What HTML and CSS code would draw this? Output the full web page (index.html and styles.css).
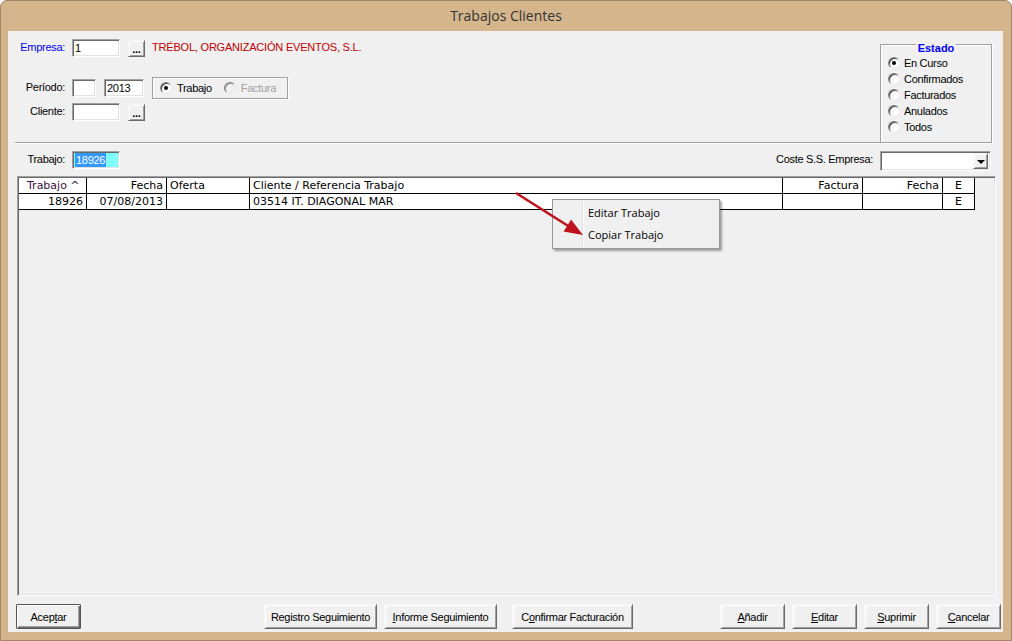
FILE: index.html
```html
<!DOCTYPE html>
<html lang="es">
<head>
    <meta charset="UTF-8">
    <title>Trabajos Clientes</title>
    <link rel="stylesheet" href="styles.css">
</head>
<body>
<div class="window">
    <div class="titlebar">Trabajos Clientes</div>
    <div class="client">
        <div class="top">
            <div class="top-left">
                <div class="row row-empresa">
                    <span class="lbl lbl-blue">Empresa:</span>
                    <span class="field field-empresa">1</span>
                    <button class="btn btn-dots">...</button>
                    <span class="empresa-name">TRÉBOL, ORGANIZACIÓN EVENTOS, S.L.</span>
                </div>
                <div class="row row-periodo">
                    <span class="lbl">Período:</span>
                    <span class="field field-mes"></span>
                    <span class="field field-anio">2013</span>
                    <div class="group-tipo">
                        <span class="opt"><span class="radio checked"></span>Trabajo</span>
                        <span class="opt disabled"><span class="radio"></span>Factura</span>
                    </div>
                </div>
                <div class="row row-cliente">
                    <span class="lbl">Cliente:</span>
                    <span class="field field-cliente"></span>
                    <button class="btn btn-dots">...</button>
                </div>
            </div>
            <div class="estado">
                <div class="estado-title"><span>Estado</span></div>
                <div class="estado-opt"><span class="radio checked"></span>En Curso</div>
                <div class="estado-opt"><span class="radio"></span>Confirmados</div>
                <div class="estado-opt"><span class="radio"></span>Facturados</div>
                <div class="estado-opt"><span class="radio"></span>Anulados</div>
                <div class="estado-opt"><span class="radio"></span>Todos</div>
            </div>
        </div>

        <div class="row row-trabajo">
            <span class="lbl">Trabajo:</span>
            <span class="field field-trabajo"><span class="sel">18926</span></span>
            <span class="spacer"></span>
            <span class="lbl-coste">Coste S.S. Empresa:</span>
            <span class="field combo"><span class="combo-btn"><span class="tri"></span></span></span>
        </div>

        <div class="grid">
            <div class="grid-line grid-head">
                <div class="cell c-sort">Trabajo ^</div>
                <div class="cell c-right">Fecha</div>
                <div class="cell c-left">Oferta</div>
                <div class="cell c-left">Cliente / Referencia Trabajo</div>
                <div class="cell c-right">Factura</div>
                <div class="cell c-right">Fecha</div>
                <div class="cell c-center">E</div>
            </div>
            <div class="grid-line">
                <div class="cell c-right">18926</div>
                <div class="cell c-right">07/08/2013</div>
                <div class="cell c-left"></div>
                <div class="cell c-left">03514 IT. DIAGONAL MAR</div>
                <div class="cell c-right"></div>
                <div class="cell c-right"></div>
                <div class="cell c-center">E</div>
            </div>
        </div>

        <div class="buttons">
            <button class="btn btn-default btn-small">Acep<u>t</u>ar</button>
            <button class="btn btn-wide btn-registro">Registro Seguimiento</button>
            <button class="btn btn-wide"><u>I</u>nforme Seguimiento</button>
            <button class="btn btn-confirmar">C<u>o</u>nfirmar Facturación</button>
            <button class="btn btn-small btn-anadir"><u>A</u>ñadir</button>
            <button class="btn btn-small"><u>E</u>ditar</button>
            <button class="btn btn-small"><u>S</u>uprimir</button>
            <button class="btn btn-small"><u>C</u>ancelar</button>
        </div>
    </div>

    <!-- popup menu and the red pointer drawn over the grid -->
    <div class="context-menu">
        <div class="menu-item">Editar Trabajo</div>
        <div class="menu-item">Copiar Trabajo</div>
    </div>
    <svg class="arrow" width="1012" height="641" viewBox="0 0 1012 641">
        <line x1="516" y1="193" x2="569" y2="226.5" stroke="#c0121c" stroke-width="2.6"/>
        <polygon points="583,235 563.5,231.5 567.5,225.5 571,219.5" fill="#c0121c"/>
    </svg>
</div>
</body>
</html>
```

FILE: styles.css
```css
* {
    box-sizing: border-box;
}
body {
    margin: 0;
    background: #fff;
    font-family: "Liberation Sans", Arial, sans-serif;
    font-size: 11px;
    letter-spacing: -0.3px;
    color: #000;
}
.window {
    position: relative;
    width: 1012px;
    height: 641px;
    background: #d5b68c;
    border: 1px solid #a08662;
    border-radius: 7px 7px 0 0;
    display: flex;
    flex-direction: column;
}
.titlebar {
    height: 30px;
    line-height: 29px;
    text-align: center;
    font-family: "Open Sans", sans-serif;
    font-size: 14px;
    letter-spacing: 0;
    color: #333;
}
.client {
    flex: 1;
    margin: 0 8px 8px 7px;
    background: #f0f0f0;
    display: flex;
    flex-direction: column;
}

/* top area */
.top {
    display: flex;
    align-items: flex-start;
    padding: 0 11px 0 7px;
}
.top-left {
    flex: 1;
    padding: 8px 0 21px 0;
    border-bottom: 1px solid #a0a0a0;
    box-shadow: 0 1px 0 #fff;
}
.row {
    display: flex;
    align-items: center;
}
.row-empresa {
    height: 18px;
}
.row-periodo {
    height: 22px;
    margin-top: 20px;
}
.row-cliente {
    height: 18px;
    margin-top: 4px;
}
.lbl {
    width: 50px;
    margin-right: 7px;
    margin-bottom: 3px;
    text-align: right;
    white-space: nowrap;
}
.lbl-blue {
    color: #0000ff;
}
.field {
    display: flex;
    align-items: center;
    height: 18px;
    padding: 0 2px;
    background: #fff;
    border: 1px solid;
    border-color: #a0a0a0 #fff #fff #a0a0a0;
    box-shadow: inset 1px 1px 0 #696969, inset -1px -1px 0 #e3e3e3;
}
.field-empresa, .field-cliente, .field-trabajo {
    width: 48px;
}
.field-mes {
    width: 24px;
}
.field-anio {
    width: 40px;
    margin-left: 8px;
}
.empresa-name {
    margin-left: 7px;
    margin-bottom: 3px;
    color: #c00000;
    letter-spacing: -0.2px;
}

/* buttons */
.btn {
    font: inherit;
    letter-spacing: -0.3px;
    color: #000;
    background: #f0f0f0;
    border: 1px solid;
    border-color: #f4f4f4 #696969 #696969 #f4f4f4;
    box-shadow: inset 1px 1px 0 #fff, inset -1px -1px 0 #a0a0a0;
    padding: 0;
    height: 25px;
}
.btn-dots {
    width: 17px;
    height: 17px;
    margin-left: 8px;
    font-weight: bold;
    line-height: 12px;
    padding-top: 2px;
}
.btn-default {
    border: 1px solid #555;
    border-radius: 1px;
    box-shadow: inset 1px 1px 0 #fff, inset -1px -1px 0 #696969, inset -2px -2px 0 #a0a0a0;
}

/* radios */
.radio {
    position: relative;
    display: inline-block;
    width: 12px;
    height: 12px;
    border-radius: 50%;
    background: #fff;
    border: 1px solid;
    border-color: #808080 #e8e8e8 #e8e8e8 #808080;
    box-shadow: inset 1px 1px 0 #404040;
    flex: none;
}
.radio.checked::after {
    content: "";
    position: absolute;
    left: 3px;
    top: 3px;
    width: 4px;
    height: 4px;
    border-radius: 50%;
    background: #000;
}
.group-tipo {
    display: flex;
    align-items: center;
    width: 136px;
    height: 22px;
    margin-left: 8px;
    padding-left: 7px;
    border: 1px solid #a0a0a0;
    box-shadow: inset 1px 1px 0 #fff, 1px 1px 0 #fff;
}
.opt {
    display: flex;
    align-items: center;
    gap: 5px;
}
.opt + .opt {
    margin-left: 12px;
}
.opt.disabled {
    color: #a0a0a0;
}
.opt.disabled .radio {
    background: #f0f0f0;
    box-shadow: inset 1px 1px 0 #a0a0a0;
}

/* estado box */
.estado {
    width: 112px;
    height: 99px;
    margin-top: 13px;
    border: 1px solid #a0a0a0;
    box-shadow: inset 1px 1px 0 #fff, 1px 1px 0 #fff;
}
.estado-title {
    margin-top: -3px;
    height: 13px;
    line-height: 13px;
    text-align: center;
}
.estado-title span {
    padding: 0 2px;
    background: #f0f0f0;
    color: #0000ff;
    font-weight: bold;
    letter-spacing: 0;
}
.estado-opt {
    display: flex;
    align-items: center;
    gap: 4px;
    height: 16px;
    padding-left: 7px;
}

/* trabajo / coste row */
.row-trabajo {
    height: 20px;
    margin-top: 8px;
    padding: 0 12px 0 7px;
    align-items: flex-start;
}
.row-trabajo .lbl {
    line-height: 14px;
    margin-top: 1px;
}
.field-trabajo {
    background: #80ffff;
    padding: 0 0 0 1px;
}
.sel {
    background: #3399ff;
    color: #fff;
    line-height: 14px;
    padding: 0 1px;
    margin-left: 1px;
}
.spacer {
    flex: 1;
}
.lbl-coste {
    margin-right: 7px;
    line-height: 14px;
    margin-top: 1px;
}
.combo {
    width: 111px;
    height: 20px;
    justify-content: flex-end;
    padding: 2px;
}
.combo-btn {
    display: flex;
    align-items: center;
    justify-content: center;
    width: 15px;
    height: 16px;
    background: #f0f0f0;
    border: 1px solid;
    border-color: #f4f4f4 #696969 #696969 #f4f4f4;
    box-shadow: inset 1px 1px 0 #fff, inset -1px -1px 0 #a0a0a0;
}
.tri {
    width: 0;
    height: 0;
    border-left: 4px solid transparent;
    border-right: 4px solid transparent;
    border-top: 4px solid #000;
    margin-top: 1px;
}

/* grid */
.grid {
    height: 420px;
    margin: 5px 7px 0 9px;
    padding: 1px;
    background: #f0f0f0;
    border: 1px solid;
    border-color: #a0a0a0 #fff #fff #a0a0a0;
    box-shadow: inset 1px 1px 0 #696969, inset -1px -1px 0 #e3e3e3;
    font-family: "DejaVu Sans", Verdana, sans-serif;
    font-size: 11px;
    letter-spacing: 0;
}
.grid-line {
    display: grid;
    grid-template-columns: 68px 80px 83px 533px 80px 80px 32px;
}
.cell {
    height: 16px;
    line-height: 15px;
    background: #fff;
    border-right: 1px solid #000;
    border-bottom: 1px solid #000;
    white-space: nowrap;
    overflow: hidden;
}
.c-right {
    text-align: right;
    padding-right: 3px;
}
.c-left {
    padding-left: 3px;
}
.c-center {
    text-align: center;
}
.c-sort {
    padding-left: 8px;
    color: #401040;
}

/* bottom buttons */
.buttons {
    display: flex;
    gap: 7px;
    margin-top: 8px;
    padding-left: 8px;
}
.btn-small {
    width: 65px;
}
.btn-wide {
    width: 113px;
}
.btn-registro {
    margin-left: 176px;
}
.btn-confirmar {
    width: 121px;
    margin-left: 8px;
}
.btn-anadir {
    margin-left: 80px;
}

/* context menu */
.context-menu {
    position: absolute;
    left: 551px;
    top: 198px;
    width: 168px;
    height: 50px;
    padding: 2px;
    background: #f0f0f0;
    border: 1px solid #979797;
    box-shadow: 2px 2px 2px rgba(0, 0, 0, 0.35);
    font-family: "Open Sans", sans-serif;
    font-size: 11px;
    letter-spacing: 0;
}
.context-menu::before {
    content: "";
    position: absolute;
    left: 29px;
    top: 2px;
    bottom: 2px;
    width: 1px;
    background: #e0e0e0;
    box-shadow: 1px 0 0 #fff;
}
.menu-item {
    height: 22px;
    line-height: 22px;
    padding-left: 33px;
}
.arrow {
    position: absolute;
    left: -1px;
    top: -1px;
    pointer-events: none;
}
```
